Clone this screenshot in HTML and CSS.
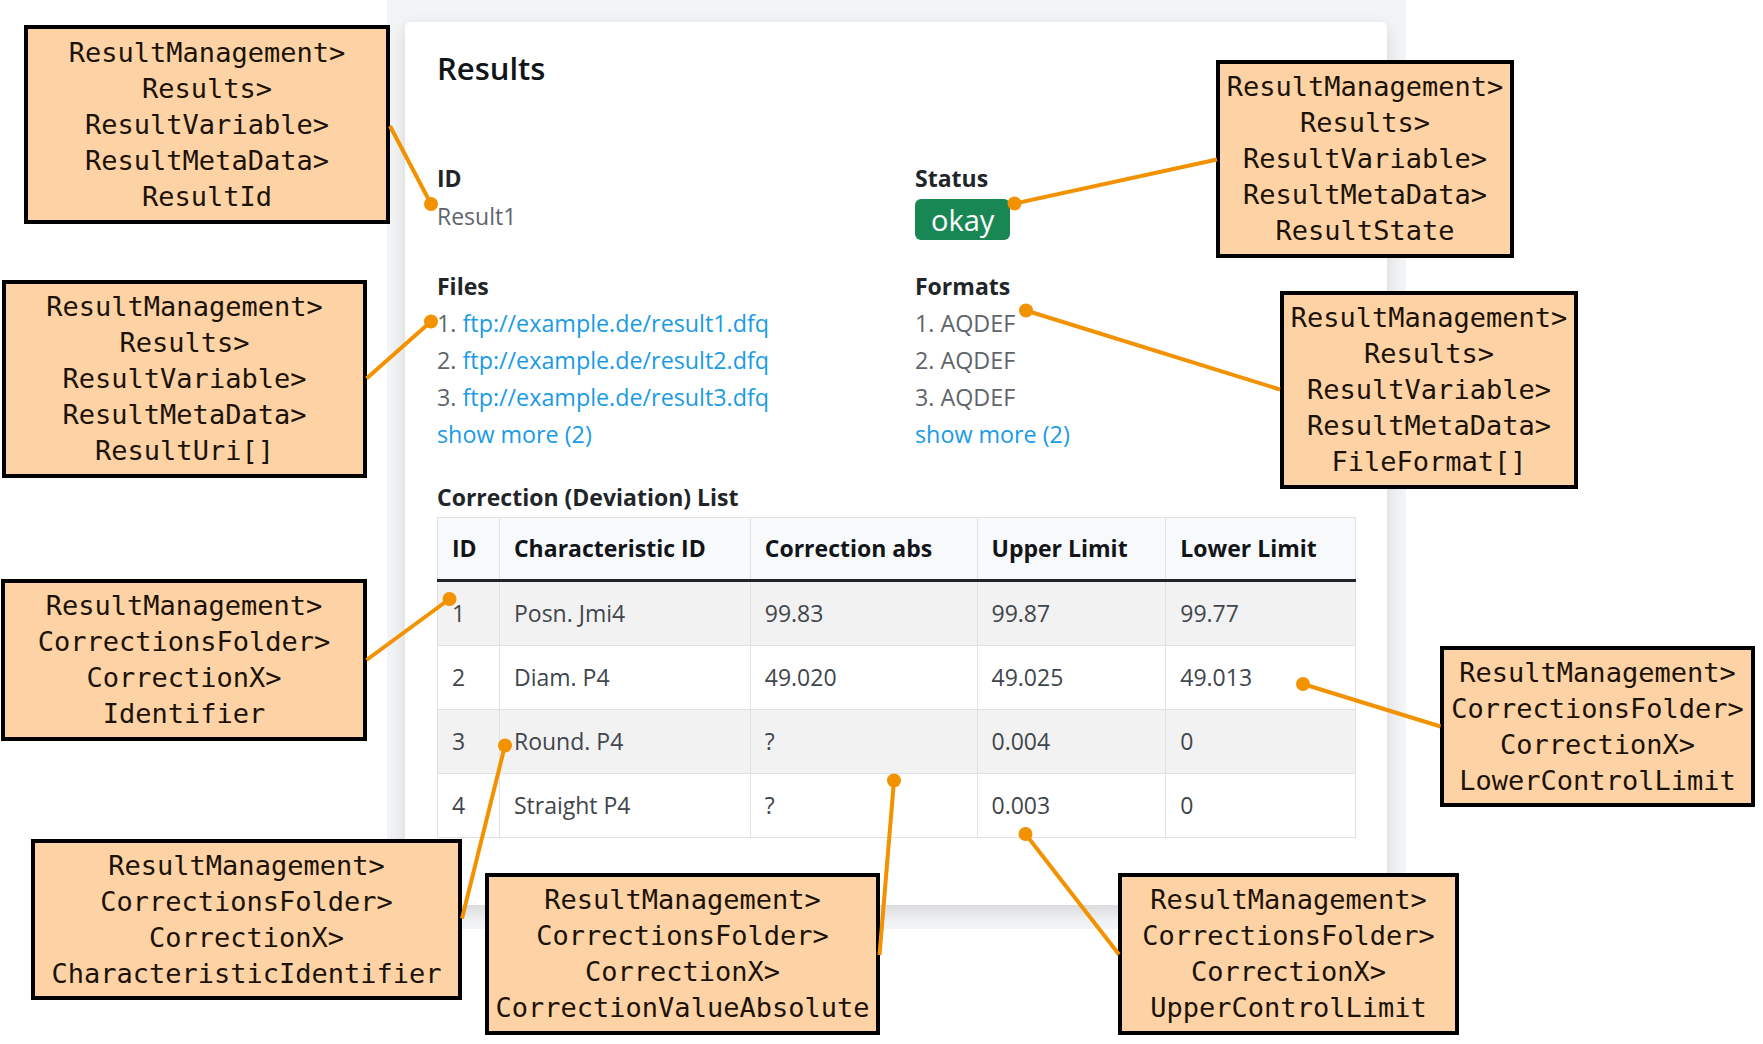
FILE: index.html
```html
<!DOCTYPE html>
<html lang="en">
<head>
<meta charset="utf-8">
<title>Results – data model annotations</title>
<link rel="stylesheet" href="styles.css">
</head>
<body>
<div class="stage">
  <div class="panel">
    <section class="card">
      <h3 class="card-title">Results</h3>
      <div class="meta">
        <div class="field">
          <div class="label">ID</div>
          <div class="value">Result1</div>
        </div>
        <div class="field">
          <div class="label">Status</div>
          <span class="badge">okay</span>
        </div>
        <div class="field">
          <div class="label">Files</div>
          <ol class="items">
            <li><a href="#">ftp://example.de/result1.dfq</a></li>
            <li><a href="#">ftp://example.de/result2.dfq</a></li>
            <li><a href="#">ftp://example.de/result3.dfq</a></li>
          </ol>
          <a class="more" href="#">show more (2)</a>
        </div>
        <div class="field">
          <div class="label">Formats</div>
          <ol class="items">
            <li>AQDEF</li>
            <li>AQDEF</li>
            <li>AQDEF</li>
          </ol>
          <a class="more" href="#">show more (2)</a>
        </div>
      </div>
      <div class="label caption">Correction (Deviation) List</div>
      <table class="corr">
        <colgroup>
          <col class="c-id"><col class="c-char"><col class="c-abs"><col class="c-up"><col class="c-low">
        </colgroup>
        <thead>
          <tr><th>ID</th><th>Characteristic ID</th><th>Correction abs</th><th>Upper Limit</th><th>Lower Limit</th></tr>
        </thead>
        <tbody>
          <tr><td>1</td><td>Posn. Jmi4</td><td>99.83</td><td>99.87</td><td>99.77</td></tr>
          <tr><td>2</td><td>Diam. P4</td><td>49.020</td><td>49.025</td><td>49.013</td></tr>
          <tr><td>3</td><td>Round. P4</td><td>?</td><td>0.004</td><td>0</td></tr>
          <tr><td>4</td><td>Straight P4</td><td>?</td><td>0.003</td><td>0</td></tr>
        </tbody>
      </table>
    </section>
  </div>

  <div class="note note-a"><span>ResultManagement&gt;</span><span>Results&gt;</span><span>ResultVariable&gt;</span><span>ResultMetaData&gt;</span><span>ResultId</span></div>
  <div class="note note-b"><span>ResultManagement&gt;</span><span>Results&gt;</span><span>ResultVariable&gt;</span><span>ResultMetaData&gt;</span><span>ResultState</span></div>
  <div class="note note-c"><span>ResultManagement&gt;</span><span>Results&gt;</span><span>ResultVariable&gt;</span><span>ResultMetaData&gt;</span><span>ResultUri[]</span></div>
  <div class="note note-d"><span>ResultManagement&gt;</span><span>Results&gt;</span><span>ResultVariable&gt;</span><span>ResultMetaData&gt;</span><span>FileFormat[]</span></div>
  <div class="note note-e"><span>ResultManagement&gt;</span><span>CorrectionsFolder&gt;</span><span>CorrectionX&gt;</span><span>Identifier</span></div>
  <div class="note note-f"><span>ResultManagement&gt;</span><span>CorrectionsFolder&gt;</span><span>CorrectionX&gt;</span><span>LowerControlLimit</span></div>
  <div class="note note-g"><span>ResultManagement&gt;</span><span>CorrectionsFolder&gt;</span><span>CorrectionX&gt;</span><span>CharacteristicIdentifier</span></div>
  <div class="note note-h"><span>ResultManagement&gt;</span><span>CorrectionsFolder&gt;</span><span>CorrectionX&gt;</span><span>CorrectionValueAbsolute</span></div>
  <div class="note note-i"><span>ResultManagement&gt;</span><span>CorrectionsFolder&gt;</span><span>CorrectionX&gt;</span><span>UpperControlLimit</span></div>

  <svg class="wires" width="1763" height="1044" viewBox="0 0 1763 1044">
    <g stroke="#f39200" stroke-width="4" fill="none">
      <line x1="390" y1="126" x2="431" y2="204"/>
      <line x1="1217" y1="159.5" x2="1014.5" y2="203.5"/>
      <line x1="366.5" y1="378.5" x2="431" y2="321.5"/>
      <line x1="1280" y1="389.5" x2="1026" y2="310.5"/>
      <line x1="366.5" y1="660" x2="449.5" y2="599"/>
      <line x1="1440.5" y1="726.5" x2="1303" y2="684"/>
      <line x1="462" y1="918.5" x2="505" y2="745.5"/>
      <line x1="879.5" y1="955" x2="894" y2="780.5"/>
      <line x1="1119" y1="954.5" x2="1025.5" y2="834"/>
    </g>
    <g fill="#f39200">
      <circle cx="431" cy="204" r="7"/>
      <circle cx="1014.5" cy="203.5" r="7"/>
      <circle cx="431" cy="321.5" r="7"/>
      <circle cx="1026" cy="310.5" r="7"/>
      <circle cx="449.5" cy="599" r="7"/>
      <circle cx="1303" cy="684" r="7"/>
      <circle cx="505" cy="745.5" r="7"/>
      <circle cx="894" cy="780.5" r="7"/>
      <circle cx="1025.5" cy="834" r="7"/>
    </g>
  </svg>
</div>
</body>
</html>
```

FILE: styles.css
```css
* { box-sizing: border-box; }

html, body {
  margin: 0;
  background: #ffffff;
}

body {
  font-family: "Open Sans", "Noto Sans", sans-serif;
  color: #212529;
}

.stage {
  position: relative;
  width: 1763px;
  height: 1044px;
  overflow: hidden;
}

/* screenshot of the app */
.panel {
  margin-left: 387px;
  width: 1019px;
  height: 929px;
  padding: 22px 19px 0 18px;
  background: #f3f4f6;
  overflow: hidden;
}

.card {
  height: 883px;
  background: #ffffff;
  border-radius: 5px;
  box-shadow: 0 6px 18px rgba(0, 0, 0, 0.13);
  padding: 27px 32px 0;
}

.card-title {
  margin: 0 0 73px;
  font-size: 31px;
  font-weight: 600;
  line-height: 38px;
  color: #111418;
}

.meta {
  display: grid;
  grid-template-columns: 478px 1fr;
  row-gap: 28px;
}

.field {
  display: flex;
  flex-direction: column;
  align-items: flex-start;
}

.label {
  font-size: 23px;
  font-weight: 700;
  line-height: 37px;
  color: #212529;
}

.value {
  margin-top: 1px;
  font-size: 23px;
  line-height: 37px;
  color: #5f656b;
}

.badge {
  margin-top: 2px;
  height: 41px;
  padding: 0 16px;
  line-height: 41px;
  font-size: 29px;
  color: #ffffff;
  background: #198754;
  border-radius: 6px;
}

.items {
  margin: 0;
  padding: 0;
  list-style: decimal inside;
  font-size: 23.3px;
  line-height: 37px;
  color: #5f656b;
}

.items a,
.more {
  color: #1a9be6;
  text-decoration: none;
}

.more {
  display: block;
  font-size: 23.3px;
  line-height: 37px;
}

.caption {
  margin-top: 26px;
}

.corr {
  margin-top: 1px;
  width: 919px;
  border-collapse: collapse;
  font-size: 23px;
  line-height: 37px;
}

.c-id { width: 62px; }
.c-char { width: 251px; }
.c-abs { width: 227px; }
.c-up { width: 189px; }
.c-low { width: 190px; }

.corr th,
.corr td {
  border: 1px solid #dee2e6;
  text-align: left;
  vertical-align: top;
}

.corr th {
  padding: 12px 14px;
  font-weight: 700;
  color: #111418;
  background: #f8f9fa;
  border-bottom: 3px solid #212529;
}

.corr td {
  padding: 13px 14px;
  color: #40464c;
  background: #ffffff;
}

.corr tbody tr:nth-child(odd) td {
  background: #f2f2f2;
}

/* annotation boxes */
.note {
  position: absolute;
  display: flex;
  flex-direction: column;
  align-items: center;
  justify-content: center;
  border: 4px solid #000000;
  background: #fdd3a5;
  font-family: "DejaVu Sans Mono", "Liberation Mono", monospace;
  font-size: 27px;
  line-height: 36px;
  color: #1c1208;
  white-space: nowrap;
}

.note-a { left: 24px;   top: 25px;  width: 366px; height: 199px; }
.note-b { left: 1216px; top: 60px;  width: 298px; height: 198px; }
.note-c { left: 2px;    top: 280px; width: 365px; height: 198px; }
.note-d { left: 1280px; top: 291px; width: 298px; height: 198px; }
.note-e { left: 1px;    top: 579px; width: 366px; height: 162px; }
.note-f { left: 1440px; top: 646px; width: 315px; height: 161px; }
.note-g { left: 31px;   top: 839px; width: 431px; height: 161px; }
.note-h { left: 485px;  top: 873px; width: 395px; height: 162px; }
.note-i { left: 1118px; top: 873px; width: 341px; height: 162px; }

.wires {
  position: absolute;
  left: 0;
  top: 0;
  pointer-events: none;
}
```
